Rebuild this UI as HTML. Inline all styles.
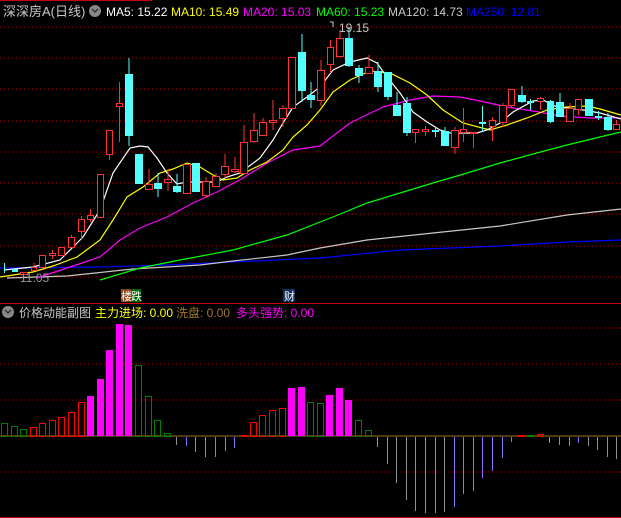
<!DOCTYPE html><html><head><meta charset="utf-8"><style>
html,body{margin:0;padding:0;background:#000;width:621px;height:518px;overflow:hidden}
svg{display:block}
text{font-family:"Liberation Sans","Noto Sans CJK SC",sans-serif}
</style></head><body>
<svg width="621" height="518" viewBox="0 0 621 518" xmlns="http://www.w3.org/2000/svg">
<rect width="621" height="518" fill="#000"/>
<line x1="0" y1="0.5" x2="152" y2="0.5" stroke="#c00" stroke-width="1"/>
<g stroke="#a00" stroke-width="1" stroke-dasharray="1,3">
<line x1="0" y1="27" x2="621" y2="27"/><line x1="0" y1="58" x2="621" y2="58"/><line x1="0" y1="89" x2="621" y2="89"/><line x1="0" y1="121" x2="621" y2="121"/><line x1="0" y1="152" x2="621" y2="152"/><line x1="0" y1="183" x2="621" y2="183"/><line x1="0" y1="214" x2="621" y2="214"/><line x1="0" y1="246" x2="621" y2="246"/><line x1="0" y1="277" x2="621" y2="277"/>
<line x1="0" y1="328" x2="621" y2="328"/><line x1="0" y1="364" x2="621" y2="364"/><line x1="0" y1="400" x2="621" y2="400"/><line x1="0" y1="472" x2="621" y2="472"/>
</g>
<!-- MA lines -->
<g fill="none" stroke-width="1.2">
<polyline stroke="#0000ff" points="0,268 100,267 167,265 233,262 320,258 400,250 500,246 567,242 621,240"/>
<polyline stroke="#c8c8c8" points="7,278 67,276 133,269 200,265 233,261 287,255 320,248 367,240 433,233 500,226 567,215 621,209"/>
<polyline stroke="#00ff00" points="100,280 140,268 180,260 233,250 287,235 320,222 333,217 367,203 400,193 433,183 467,173 500,163 533,154 567,145 600,137 621,132"/>
<polyline stroke="#ff00ff" points="37,278 67,268 100,257 120,240 140,228 167,217 193,203 217,192 243,178 267,163 283,155 293,150 320,146 350,123 383,107 410,100 433,96 460,97 480,101 507,107 533,111 560,116 590,118 621,118"/>
<polyline stroke="#ffff00" points="0,277 33,272 53,266 77,257 100,240 113,220 127,197 143,187 160,173 173,169 187,163 200,167 213,175 223,180 237,178 250,170 267,162 283,150 293,137 307,125 320,110 333,92 350,80 370,71 390,73 410,83 427,95 443,110 463,123 490,130 507,125 527,118 547,110 567,107 587,106 600,109 621,115"/>
<polyline stroke="#ffffff" points="4,270 33,267 60,260 83,237 100,210 113,173 130,148 140,146 148,147 157,158 167,173 177,184 187,182 200,182 217,182 227,177 240,173 260,158 273,140 283,123 293,107 307,97 320,87 333,70 350,62 367,58 377,63 387,77 400,93 413,112 427,122 440,130 450,133 477,133 487,130 500,123 513,112 533,101 543,100 557,107 567,108 583,110 600,113 621,119"/>
</g>
<g id="candles"></g>
<text x="339" y="32" fill="#c8c8c8" font-size="12">19.15</text>
<path d="M330 22 h3 v5" stroke="#c8c8c8" fill="none"/>
<text x="20" y="282" fill="#999" font-size="12">11.05</text>
<!-- header -->
<text x="3" y="16" fill="#c8c8c8" font-size="13">深深房A(日线)</text>
<circle cx="95" cy="11" r="6" fill="#888"/><path d="M92 9 l3 3 l3 -3" stroke="#333" stroke-width="1.5" fill="none"/>
<text y="16" font-size="12"><tspan x="106" fill="#fff">MA5: 15.22</tspan><tspan x="171" fill="#ffff00">MA10: 15.49</tspan><tspan x="243" fill="#ff00ff">MA20: 15.03</tspan><tspan x="316" fill="#00ff00">MA60: 15.23</tspan><tspan x="388" fill="#c8c8c8">MA120: 14.73</tspan><tspan x="466" fill="#0000ff">MA250: 12.81</tspan></text>
<!-- labels -->
<rect x="121" y="289" width="10" height="13" fill="#8b4513"/><rect x="131" y="289" width="10" height="13" fill="#006400"/>
<text x="121" y="300" font-size="11" fill="#fff">楼</text><text x="131" y="300" font-size="11" fill="#fff">跌</text>
<rect x="283" y="289" width="12" height="13" fill="#103060"/><text x="284" y="300" font-size="11" fill="#fff">财</text>
<line x1="0" y1="303.5" x2="621" y2="303.5" stroke="#c00"/>
<circle cx="8" cy="312" r="6" fill="#888"/><path d="M5 310 l3 3 l3 -3" stroke="#333" stroke-width="1.5" fill="none"/>
<text y="317" font-size="12"><tspan x="19" fill="#c8c8c8">价格动能副图</tspan><tspan x="95" fill="#ffff00">主力进场: 0.00</tspan><tspan x="176" fill="#a07828">洗盘: 0.00</tspan><tspan x="236" fill="#ff00ff">多头强势: 0.00</tspan></text>
<line x1="0" y1="436" x2="621" y2="436" stroke="#a07828"/>
<g id="hist"></g>
<line x1="0" y1="517.5" x2="621" y2="517.5" stroke="#a00"/>
<script>
var ns="http://www.w3.org/2000/svg";
function el(p,t,a){var e=document.createElementNS(ns,t);for(var k in a)e.setAttribute(k,a[k]);p.appendChild(e);return e;}
var C=[[4,4,268,268,263,273,'c'],[12,17,269,271,269,271,'c'],[20,27,272,274,272,274,'r'],[31,36,267,270,263,270,'r'],[39,45,255,267,255,267,'r'],[49,55,253,255,250,259,'r'],[58,64,247,255,247,255,'r'],[68,74,237,247,235,247,'r'],[78,84,219,231,216,240,'r'],[87,93,215,219,209,222,'r'],[97,103,174,217,174,217,'r'],[106,112,130,154,130,160,'r'],[116,122,103,106,82,142,'r'],[125,132,74,135,58,146,'c'],[135,142,154,183,154,183,'c'],[145,152,184,189,169,189,'r'],[154,161,183,188,173,197,'c'],[164,171,179,182,169,191,'r'],[173,180,186,191,174,193,'c'],[183,190,164,193,164,193,'r'],[192,199,163,191,163,191,'c'],[202,209,181,195,177,198,'r'],[212,219,176,186,173,186,'r'],[221,228,166,174,154,178,'r'],[231,238,169,171,157,173,'r'],[240,247,142,173,125,173,'r'],[250,257,130,141,113,143,'r'],[259,266,122,135,118,135,'r'],[269,276,120,122,100,130,'r'],[279,286,108,118,105,127,'r'],[288,295,57,108,57,108,'r'],[298,305,52,90,34,102,'c'],[307,314,95,99,82,108,'c'],[317,324,70,100,60,106,'r'],[327,333,47,64,40,73,'r'],[336,343,38,56,30,57,'r'],[345,352,38,65,27,67,'c'],[355,362,68,75,65,83,'c'],[365,372,67,73,55,73,'r'],[374,381,71,86,62,92,'c'],[384,391,72,96,72,100,'c'],[393,400,105,115,92,115,'c'],[403,410,103,132,97,136,'c'],[412,418,129,132,129,143,'r'],[422,428,129,131,126,136,'r'],[432,438,130,130,127,137,'c'],[441,448,131,145,127,145,'c'],[451,458,130,147,127,154,'r'],[460,466,129,132,108,142,'r'],[470,476,132,132,132,148,'r'],[479,485,122,122,106,132,'c'],[489,495,120,126,117,141,'r'],[499,506,105,122,103,127,'r'],[508,514,89,105,89,108,'r'],[518,525,95,101,86,103,'c'],[527,533,101,101,99,110,'c'],[537,543,98,101,97,110,'r'],[547,553,101,121,100,123,'c'],[556,563,102,116,93,116,'c'],[566,573,108,121,103,121,'r'],[575,581,99,109,99,115,'r'],[585,592,99,115,99,115,'c'],[595,601,116,116,111,120,'c'],[604,611,117,129,113,131,'c'],[613,619,124,129,120,129,'r']];
var g=document.getElementById('candles');
C.forEach(function(c){var cx=(c[0]+c[1])/2+0.5,col=c[6]=='r'?'#ff3232':'#54ffff';
el(g,'line',{x1:cx,x2:cx,y1:c[4],y2:c[5],stroke:col,'stroke-width':1});
if(c[0]==c[1]){return;}
var h=Math.max(c[3]-c[2],1);
if(c[6]=='r'){el(g,'rect',{x:c[0]+0.5,y:c[2]+0.5,width:c[1]-c[0],height:h,fill:'#000',stroke:col,'stroke-width':1});}
else el(g,'rect',{x:c[0],y:c[2],width:c[1]-c[0]+1,height:h+1,fill:col});});
var H=[[1,423,'g'],[11,426,'g'],[20,429,'g'],[30,427,'r'],[39,423,'r'],[49,420,'r'],[58,417,'r'],[68,412,'r'],[78,402,'r'],[87,396,'m'],[97,379,'m'],[106,350,'m'],[116,324,'m'],[125,325,'m'],[135,365,'g'],[145,396,'g'],[154,420,'g'],[164,433,'g'],[250,422,'r'],[259,415,'r'],[269,410,'r'],[279,408,'r'],[288,388,'m'],[298,387,'m'],[307,402,'g'],[317,403,'g'],[326,395,'m'],[336,388,'m'],[345,400,'m'],[355,420,'g'],[365,430,'g'],[537,434,'r']];
var hg=document.getElementById('hist');
H.forEach(function(b){var col=b[2]=='r'?'#ff0000':b[2]=='g'?'#008000':'#ff00ff';
if(b[2]=='m')el(hg,'rect',{x:b[0],y:b[1],width:7,height:436-b[1],fill:col});
else el(hg,'rect',{x:b[0]+0.5,y:b[1]+0.5,width:6,height:436-b[1],fill:'none',stroke:col});});
el(hg,'rect',{x:241,y:435,width:6,height:2,fill:'#f00'});el(hg,'rect',{x:518,y:435,width:7,height:2,fill:'#f00'});el(hg,'rect',{x:527,y:435,width:7,height:2,fill:'#080'});
var N=[[176,445,'a'],[186,446,'p'],[195,452,'a'],[205,457,'a'],[215,457,'p'],[225,451,'p'],[234,448,'p'],[377,447,'a'],[387,464,'a'],[396,483,'a'],[406,500,'a'],[415,511,'a'],[425,513,'a'],[435,513,'p'],[444,512,'a'],[454,507,'p'],[463,494,'p'],[473,491,'p'],[482,478,'p'],[492,471,'p'],[502,458,'p'],[511,442,'p'],[549,443,'a'],[559,445,'a'],[569,446,'a'],[578,443,'p'],[588,446,'a'],[597,450,'a'],[607,457,'a'],[616,459,'a']];
N.forEach(function(n){el(hg,'line',{x1:n[0]+0.5,x2:n[0]+0.5,y1:437,y2:n[1],stroke:n[2]=='p'?'#9070ff':'#909090'});});
</script>
</svg>
</body></html>
